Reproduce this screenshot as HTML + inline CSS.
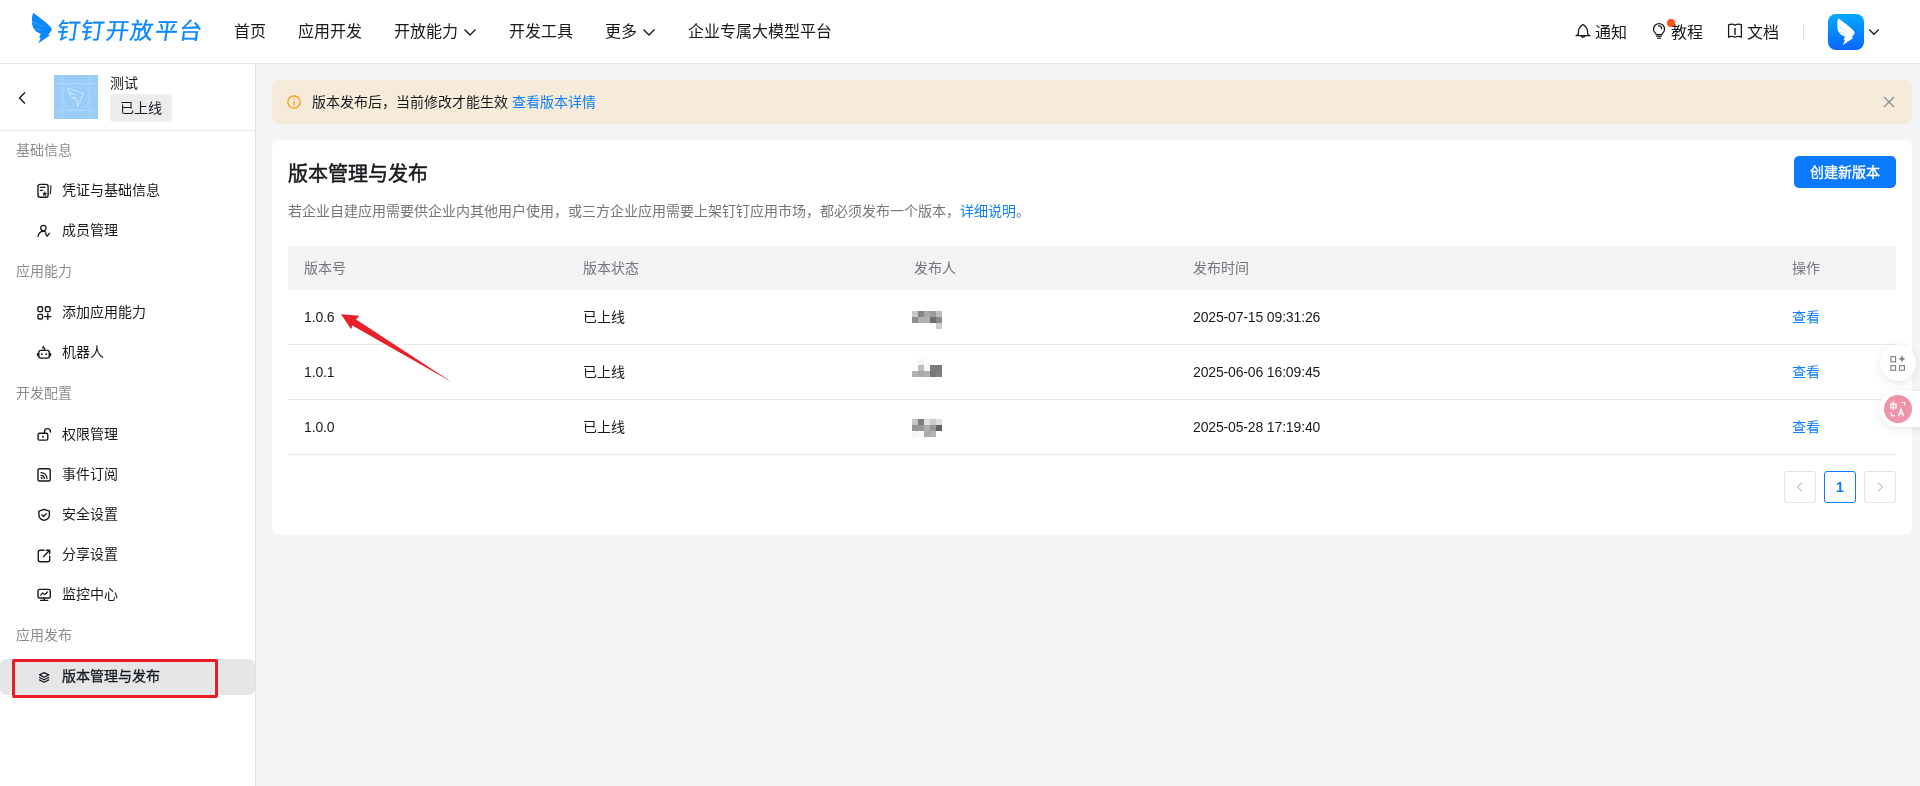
<!DOCTYPE html>
<html lang="zh-CN">
<head>
<meta charset="utf-8">
<style>
*{box-sizing:border-box;margin:0;padding:0}
html,body{width:1920px;height:786px;overflow:hidden;background:#f4f5f7;filter:grayscale(0.001);font-family:"Liberation Sans",sans-serif;color:#171a1d}
.abs{position:absolute}
#hdr{position:absolute;left:0;top:0;width:1920px;height:64px;background:#fff;border-bottom:1px solid #e9eaec}
.nav{position:absolute;top:21px;font-size:16px;line-height:22px;color:#171a1d;white-space:nowrap}
.rt{position:absolute;top:21.5px;font-size:16px;line-height:22px;color:#171a1d;white-space:nowrap}
#side{position:absolute;left:0;top:64px;width:256px;height:722px;background:#fff;border-right:1px solid #dfe0e3}
.sh{position:absolute;left:16px;font-size:14px;line-height:20px;color:#8b8d91;white-space:nowrap}
.si{position:absolute;left:62px;font-size:14px;line-height:20px;color:#171a1d;white-space:nowrap}
.ic{position:absolute;left:36px;width:14px;height:14px}
#banner{position:absolute;left:272px;top:80px;width:1640px;height:44px;background:#f6ead9;border-radius:8px}
#card{position:absolute;left:272px;top:140px;width:1640px;height:395px;background:#fff;border-radius:8px}
.th{position:absolute;top:258px;font-size:14px;line-height:20px;color:#747679;white-space:nowrap}
.td{position:absolute;font-size:14px;line-height:20px;color:#171a1d;white-space:nowrap;letter-spacing:-0.15px}
.lk{color:#0d80ff}
.rowline{position:absolute;left:288px;width:1608px;height:1px;background:#e9eaec}
.pg{position:absolute;top:471px;width:32px;height:32px;border:1px solid #e3e4e6;border-radius:3px;background:#fff}
.mos{position:absolute;width:30px;height:18px}
.mos i{position:absolute;width:6px;height:6px}
</style>
</head>
<body>
<div id="hdr">
  <svg class="abs" style="left:26px;top:8px" width="32" height="40" viewBox="0 0 32 40"><path d="M7.1 4.8 C12 8.5 20 14 24.9 19.3 Q26.6 21.2 25 23.2 L22.4 26.4 L24 27.2 L12.2 35.6 L14.7 30.2 L13.2 29.2 L14.8 25.8 C11.5 24.8 9 23 8.1 21.1 C6.6 19.3 6 16.5 6.1 13.5 C5.9 11.5 5.9 8 7.1 4.8 Z" fill="#0a89ff"/><path d="M6.3 13.3 C9 15 13 16.5 16.3 18.3 M8.2 20.9 C10.5 21.4 12.8 21.6 14.8 21.6" fill="none" stroke="#5aaeff" stroke-width="0.7" stroke-linecap="round"/></svg>
  <div class="abs" style="left:55px;top:17px;font-size:23px;line-height:28px;color:#0a89ff;font-weight:500;transform:skewX(-8deg);transform-origin:left bottom;letter-spacing:1.5px;white-space:nowrap;-webkit-text-stroke:0.3px #0a89ff">钉钉开放平台</div>
  <div class="nav" style="left:234px">首页</div>
  <div class="nav" style="left:298px">应用开发</div>
  <div class="nav" style="left:394px">开放能力</div>
  <svg class="abs" style="left:463px;top:27.3px" width="14" height="10" viewBox="0 0 14 10"><path d="M1.5 2.5 L7 8 L12.5 2.5" fill="none" stroke="#171a1d" stroke-width="1.4"/></svg>
  <div class="nav" style="left:509px">开发工具</div>
  <div class="nav" style="left:605px">更多</div>
  <svg class="abs" style="left:642px;top:27.3px" width="14" height="10" viewBox="0 0 14 10"><path d="M1.5 2.5 L7 8 L12.5 2.5" fill="none" stroke="#171a1d" stroke-width="1.4"/></svg>
  <div class="nav" style="left:688px">企业专属大模型平台</div>

  <svg class="abs" style="left:1574px;top:22px" width="18" height="18" viewBox="0 0 18 18" fill="none" stroke="#171a1d" stroke-width="1.3" stroke-linecap="round" stroke-linejoin="round"><path d="M2 13.6 H16 M2.8 13.6 C4.1 12.8 4.5 12 4.5 10.5 V8.6 C4.5 6.6 5.5 5.7 6.5 4.8 L7.7 3.5 Q9 1.9 10.3 3.5 L11.5 4.8 C12.5 5.7 13.5 6.6 13.5 8.6 V10.5 C13.5 12 13.9 12.8 15.2 13.6 M7.3 14.1 A1.75 1.5 0 0 0 10.7 14.1"/></svg>
  <div class="rt" style="left:1595px">通知</div>
  <svg class="abs" style="left:1650px;top:20px" width="18" height="20" viewBox="0 0 18 20" fill="none" stroke="#171a1d" stroke-width="1.3" stroke-linecap="round" stroke-linejoin="round"><path d="M6.3 14.6 C6.2 13.3 3.5 12.2 3.5 9.2 A5.55 5.55 0 0 1 14.6 9.2 C14.6 12.2 11.9 13.3 11.8 14.6 Z"/><path d="M6.6 16.2 H11.5 M7.6 18.2 H10.5"/><path d="M8.4 5.8 A3.5 3.5 0 0 1 11.9 8.8" stroke-width="1.1"/></svg>
  <div class="abs" style="left:1667px;top:18.8px;width:8px;height:8px;border-radius:50%;background:#ff5219"></div>
  <div class="rt" style="left:1671px">教程</div>
  <svg class="abs" style="left:1726px;top:22px" width="18" height="18" viewBox="0 0 18 18" fill="none" stroke="#171a1d" stroke-width="1.3" stroke-linecap="round" stroke-linejoin="round"><path d="M2.6 2.8 Q5.8 1.3 9 3.1 Q12.2 1.3 15.4 2.8 V15.1 Q12.2 13.6 9 15.3 Q5.8 13.6 2.6 15.1 Z"/><path d="M9 6.5 V12.6" stroke-width="1.4"/></svg>
  <div class="rt" style="left:1746.5px">文档</div>
  <div class="abs" style="left:1803px;top:24px;width:1px;height:16px;background:#dcdde0"></div>
  <div class="abs" style="left:1828px;top:14px;width:36px;height:36px;border-radius:8px;background:linear-gradient(180deg,#03a9ff,#0a64ff)"></div>
  <svg class="abs" style="left:1832px;top:13.6px" width="28.2" height="35.2" viewBox="0 0 32 40"><path d="M7.1 4.8 C12 8.5 20 14 24.9 19.3 Q26.6 21.2 25 23.2 L22.4 26.4 L24 27.2 L12.2 35.6 L14.7 30.2 L13.2 29.2 L14.8 25.8 C11.5 24.8 9 23 8.1 21.1 C6.6 19.3 6 16.5 6.1 13.5 C5.9 11.5 5.9 8 7.1 4.8 Z" fill="#ffffff"/><path d="M6.3 13.3 C9 15 13 16.5 16.3 18.3 M8.2 20.9 C10.5 21.4 12.8 21.6 14.8 21.6" fill="none" stroke="#a9d6ff" stroke-width="0.7" stroke-linecap="round"/></svg>
  <svg class="abs" style="left:1868px;top:28px" width="12" height="8" viewBox="0 0 12 8"><path d="M1.2 1.5 L6 6.3 L10.8 1.5" fill="none" stroke="#171a1d" stroke-width="1.25"/></svg>
</div>

<div id="side">
  <svg class="abs" style="left:17px;top:27px" width="10" height="14" viewBox="0 0 10 14"><path d="M8 1.5 L2.5 7 L8 12.5" fill="none" stroke="#171a1d" stroke-width="1.4"/></svg>
  <svg class="abs" style="left:54px;top:11px" width="44" height="44" viewBox="0 0 44 44">
    <rect width="44" height="44" fill="#99cdf8"/>
    <path d="M8.4 0 V44 M35.6 0 V44 M0 8.5 H44 M0 35.4 H44" stroke="#b0d9fb" stroke-width="0.8"/>
    <circle cx="22.1" cy="21.8" r="13.7" fill="none" stroke="#b0d9fb" stroke-width="0.8"/>
    <path d="M14.3 13.2 C18 14.5 25 16.5 29 19.2 C28 22 26.5 25 25.5 26.5 L26.5 27 L23.5 31.4 L24 28.5 L22.5 27.5 L23.5 25.5 C20 24.5 17.5 22.5 16.5 20 C15 18 14 15.5 14.3 13.2 Z M15.5 17.5 Q19 19.5 22.5 19.7 M18.5 22.5 H22.8" fill="none" stroke="#dcefff" stroke-width="0.8"/>
  </svg>
  <div class="abs" style="left:110px;top:9px;font-size:14px;line-height:20px;color:#171a1d">测试</div>
  <div class="abs" style="left:110px;top:30px;width:62px;height:28px;border-radius:4px;background:#ebecee;font-size:14px;line-height:28px;text-align:center;color:#171a1d">已上线</div>
  <div class="abs" style="left:0;top:66px;width:255px;height:1px;background:#e9eaec"></div>

  <div class="sh" style="top:76px">基础信息</div>
  <svg class="abs" style="left:36px;top:119px" width="16" height="16" viewBox="0 0 16 16" fill="none" stroke="#171a1d" stroke-width="1.4" stroke-linecap="round" stroke-linejoin="round"><rect x="2" y="1.4" width="10.1" height="12.9" rx="2"/><path d="M4.3 4.4 H9 M4.3 7.3 H6.8" stroke-width="1.2"/><path d="M8.7 8.9 L9.3 10.2 L10.7 10.4 L9.7 11.3 L10 12.6 L8.7 11.9 L7.4 12.6 L7.7 11.3 L6.7 10.4 L8.1 10.2 Z" fill="#171a1d" stroke-width="0.6"/><path d="M14.6 2.8 L15 3.3 L14.3 10.8" stroke-width="1.1"/></svg>
  <div class="si" style="top:116px">凭证与基础信息</div>
  <svg class="abs" style="left:36px;top:160px" width="16" height="16" viewBox="0 0 16 16" fill="none" stroke="#171a1d" stroke-width="1.4" stroke-linecap="round" stroke-linejoin="round"><circle cx="7.4" cy="4.1" r="2.7" stroke-width="1.3"/><path d="M2.1 12.5 C2.5 9.2 4.8 7.4 7.4 7.4 C8.4 7.4 9.3 7.7 10 8.2" stroke-width="1.3"/><path d="M9.6 9.6 L11.1 12.3 L13.3 9.3" stroke-width="1.3"/></svg>
  <div class="si" style="top:156px">成员管理</div>

  <div class="sh" style="top:197px">应用能力</div>
  <svg class="abs" style="left:36px;top:241px" width="16" height="16" viewBox="0 0 16 16" fill="none" stroke="#171a1d" stroke-width="1.4" stroke-linecap="round" stroke-linejoin="round"><rect x="1.9" y="1.8" width="4.6" height="4.8" rx="1.3"/><rect x="9.4" y="1.8" width="4.7" height="4.8" rx="1.3"/><rect x="1.9" y="9.4" width="4.6" height="4.6" rx="1.3"/><path d="M11.8 8.6 V14.6 M8.8 11.6 H14.8"/></svg>
  <div class="si" style="top:238px">添加应用能力</div>
  <svg class="abs" style="left:36px;top:281px" width="16" height="16" viewBox="0 0 16 16" fill="none" stroke="#171a1d" stroke-width="1.4" stroke-linecap="round" stroke-linejoin="round"><rect x="2.8" y="5.4" width="10.5" height="7.7" rx="2"/><rect x="0.9" y="8" width="1.4" height="3.2" fill="#171a1d" stroke="none"/><rect x="13.8" y="8" width="1.4" height="3.2" fill="#171a1d" stroke="none"/><circle cx="5.9" cy="9.2" r="0.9" fill="#171a1d" stroke="none"/><circle cx="10.3" cy="9.2" r="0.9" fill="#171a1d" stroke="none"/><path d="M7.6 1.2 L6.4 3 H9 L8.2 4.8" stroke-width="1.1"/></svg>
  <div class="si" style="top:278px">机器人</div>

  <div class="sh" style="top:319px">开发配置</div>
  <svg class="abs" style="left:36px;top:363px" width="16" height="16" viewBox="0 0 16 16" fill="none" stroke="#171a1d" stroke-width="1.4" stroke-linecap="round" stroke-linejoin="round"><rect x="2" y="6.3" width="9.8" height="6.8" rx="1.6"/><path d="M8.5 6.3 V4.6 A2.95 2.95 0 0 1 14.4 4.6 V5"/><circle cx="7" cy="9.7" r="1" fill="#171a1d" stroke="none"/></svg>
  <div class="si" style="top:360px">权限管理</div>
  <svg class="abs" style="left:36px;top:403px" width="16" height="16" viewBox="0 0 16 16" fill="none" stroke="#171a1d" stroke-width="1.4" stroke-linecap="round" stroke-linejoin="round"><rect x="2" y="1.7" width="12.2" height="12.3" rx="1.8"/><path d="M5 5.6 A6 6 0 0 1 11 11.6 M5 8.3 A3.3 3.3 0 0 1 8.3 11.6" stroke-width="1.3"/><circle cx="5.6" cy="10.9" r="1" fill="#171a1d" stroke="none"/></svg>
  <div class="si" style="top:400px">事件订阅</div>
  <svg class="abs" style="left:36px;top:443px" width="16" height="16" viewBox="0 0 16 16" fill="none" stroke="#171a1d" stroke-width="1.4" stroke-linecap="round" stroke-linejoin="round"><path d="M8.15 2.3 L13.4 4.1 V8 C13.4 10.8 11 12.7 8.15 13.4 C5.3 12.7 2.9 10.8 2.9 8 V4.1 Z"/><path d="M5.9 8 L7.5 9.5 L10.4 6.6" stroke-width="1.3"/></svg>
  <div class="si" style="top:440px">安全设置</div>
  <svg class="abs" style="left:36px;top:484px" width="16" height="16" viewBox="0 0 16 16" fill="none" stroke="#171a1d" stroke-width="1.4" stroke-linecap="round" stroke-linejoin="round"><path d="M8 2.3 H4.3 A2 2 0 0 0 2.3 4.3 V11.7 A2 2 0 0 0 4.3 13.7 H11.7 A2 2 0 0 0 13.7 11.7 V8.2"/><path d="M7.6 8.4 L13.7 2.3 M10.2 2.3 H13.7 V5.8"/></svg>
  <div class="si" style="top:480px">分享设置</div>
  <svg class="abs" style="left:36px;top:523px" width="16" height="16" viewBox="0 0 16 16" fill="none" stroke="#171a1d" stroke-width="1.4" stroke-linecap="round" stroke-linejoin="round"><rect x="2" y="2.4" width="12.3" height="8.6" rx="1.8"/><path d="M8.15 11 V13.3 M4.6 13.4 H11.7"/><path d="M4.7 8.2 L6.6 6 L8.8 7.5 L11.5 5" stroke-width="1.2"/></svg>
  <div class="si" style="top:520px">监控中心</div>

  <div class="sh" style="top:561px">应用发布</div>
  <div class="abs" style="left:0;top:595px;width:255px;height:36px;background:#e5e6e8;border-radius:6px"></div>
  <div class="abs" style="left:12px;top:594.5px;width:206px;height:39.5px;border:3.5px solid #e81c24;border-radius:2px"></div>
  <svg class="abs" style="left:36px;top:606px" width="16" height="16" viewBox="0 0 16 16" fill="none" stroke="#171a1d" stroke-width="1.4" stroke-linecap="round" stroke-linejoin="round"><path d="M8.15 2.6 L12.8 4.9 L8.15 7.2 L3.5 4.9 Z" stroke-width="1.2"/><path d="M3.5 7.5 L8.15 9.8 L12.8 7.5 M3.5 9.9 L8.15 12.2 L12.8 9.9" stroke-width="1.2"/></svg>
  <div class="si" style="top:602px;-webkit-text-stroke:0.3px #171a1d">版本管理与发布</div>
</div>

<div id="banner">
  <svg class="abs" style="left:15px;top:15px" width="14" height="14" viewBox="0 0 14 14"><circle cx="7" cy="7" r="6.2" fill="none" stroke="#ff9200" stroke-width="1.2"/><path d="M7 6 V10.5" stroke="#ff9200" stroke-width="1.3"/><circle cx="7" cy="4" r="0.8" fill="#ff9200"/></svg>
  <div class="abs" style="left:40px;top:12px;font-size:14px;line-height:20px;color:#171a1d;white-space:nowrap">版本发布后，当前修改才能生效 <span class="lk">查看版本详情</span></div>
  <svg class="abs" style="left:1611px;top:16px" width="12" height="12" viewBox="0 0 12 12"><path d="M1 1 L11 11 M11 1 L1 11" stroke="#86909c" stroke-width="1.3"/></svg>
</div>

<div id="card">
  <div class="abs" style="left:16px;top:20px;font-size:20px;line-height:28px;font-weight:400;-webkit-text-stroke:0.5px #171a1d;color:#171a1d;white-space:nowrap">版本管理与发布</div>
  <div class="abs" style="left:16px;top:61px;font-size:14px;line-height:20px;color:#747679;white-space:nowrap">若企业自建应用需要供企业内其他用户使用，或三方企业应用需要上架钉钉应用市场，都必须发布一个版本，<span class="lk">详细说明</span>。</div>
  <div class="abs" style="left:1522px;top:16px;width:102px;height:32px;border-radius:5px;background:#0a7aff;color:#fff;font-size:14px;line-height:32px;text-align:center;font-weight:400;-webkit-text-stroke:0.35px #fff">创建新版本</div>
</div>

<div class="abs" style="left:288px;top:246px;width:1608px;height:44px;background:#f2f3f5"></div>
<div class="th" style="left:304px">版本号</div>
<div class="th" style="left:583px">版本状态</div>
<div class="th" style="left:914px">发布人</div>
<div class="th" style="left:1193px">发布时间</div>
<div class="th" style="left:1792px">操作</div>

<div class="td" style="left:304px;top:307px">1.0.6</div>
<div class="td" style="left:583px;top:307px">已上线</div>
<div class="td" style="left:1193px;top:307px">2025-07-15 09:31:26</div>
<div class="td lk" style="left:1792px;top:307px">查看</div>
<div class="rowline" style="top:344px"></div>
<div class="td" style="left:304px;top:362px">1.0.1</div>
<div class="td" style="left:583px;top:362px">已上线</div>
<div class="td" style="left:1193px;top:362px">2025-06-06 16:09:45</div>
<div class="td lk" style="left:1792px;top:362px">查看</div>
<div class="rowline" style="top:399px"></div>
<div class="td" style="left:304px;top:417px">1.0.0</div>
<div class="td" style="left:583px;top:417px">已上线</div>
<div class="td" style="left:1193px;top:417px">2025-05-28 17:19:40</div>
<div class="td lk" style="left:1792px;top:417px">查看</div>
<div class="rowline" style="top:454px"></div>

<!-- mosaics -->
<div class="mos" style="left:912px;top:311px">
<i style="left:0;top:0;background:#c8c8c8"></i><i style="left:6px;top:0;background:#858585"></i><i style="left:12px;top:0;background:#a8a8a8"></i><i style="left:18px;top:0;background:#9a9a9a"></i><i style="left:24px;top:0;background:#bdbdbd"></i>
<i style="left:0;top:6px;background:#8f8f8f"></i><i style="left:6px;top:6px;background:#b0b0b0"></i><i style="left:12px;top:6px;background:#b0b0b0"></i><i style="left:18px;top:6px;background:#6e6e6e"></i><i style="left:24px;top:6px;background:#8a8a8a"></i>
<i style="left:24px;top:12px;background:#cfcfcf"></i>
</div>
<div class="mos" style="left:912px;top:359px">
<i style="left:6px;top:0;background:#f4f4f4"></i>
<i style="left:6px;top:6px;background:#bebebe"></i><i style="left:12px;top:6px;background:#f8f8f8"></i><i style="left:18px;top:6px;background:#7b7b7b"></i><i style="left:24px;top:6px;background:#7b7b7b"></i>
<i style="left:0;top:12px;background:#b4b4b4"></i><i style="left:6px;top:12px;background:#a8a8a8"></i><i style="left:12px;top:12px;background:#b0b0b0"></i><i style="left:18px;top:12px;background:#777777"></i><i style="left:24px;top:12px;background:#828282"></i>
</div>
<div class="mos" style="left:912px;top:419px">
<i style="left:0;top:0;background:#c6c6c6"></i><i style="left:6px;top:0;background:#7e7e7e"></i><i style="left:12px;top:0;background:#e0e0e0"></i><i style="left:18px;top:0;background:#cccccc"></i><i style="left:24px;top:0;background:#dedede"></i>
<i style="left:0;top:6px;background:#969696"></i><i style="left:6px;top:6px;background:#989898"></i><i style="left:12px;top:6px;background:#b0b0b0"></i><i style="left:18px;top:6px;background:#979797"></i><i style="left:24px;top:6px;background:#646464"></i>
<i style="left:0;top:12px;background:#f5f5f5"></i><i style="left:6px;top:12px;background:#fafafa"></i><i style="left:12px;top:12px;background:#acacac"></i><i style="left:18px;top:12px;background:#b3b3b3"></i>
</div>

<!-- pagination -->
<div class="pg" style="left:1784px"><svg class="abs" style="left:10px;top:9px" width="10" height="12" viewBox="0 0 10 12"><path d="M7 1.5 L2.5 6 L7 10.5" fill="none" stroke="#c9cbcf" stroke-width="1.2"/></svg></div>
<div class="pg" style="left:1824px;border-color:#0a7aff;color:#0a7aff;font-size:14px;line-height:30px;text-align:center;font-weight:bold;-webkit-text-stroke:0">1</div>
<div class="pg" style="left:1864px"><svg class="abs" style="left:10px;top:9px" width="10" height="12" viewBox="0 0 10 12"><path d="M3 1.5 L7.5 6 L3 10.5" fill="none" stroke="#c9cbcf" stroke-width="1.2"/></svg></div>

<!-- floating buttons -->
<div class="abs" style="left:1880px;top:345px;width:36px;height:36px;border-radius:50%;background:#fff;box-shadow:0 2px 8px rgba(0,0,0,0.10)"></div>
<svg class="abs" style="left:1876px;top:340px" width="44" height="47" viewBox="0 0 44 47" fill="none" stroke="#808286" stroke-width="1.15"><rect x="14.95" y="16.65" width="4.6" height="5.2"/><rect x="14.95" y="25.65" width="4.6" height="4.6"/><rect x="23.6" y="25.65" width="4.8" height="4.6"/><path d="M26 15.3 Q26.5 18.2 29.5 18.8 Q26.5 19.4 26 22.3 Q25.5 19.4 22.5 18.8 Q25.5 18.2 26 15.3 Z" fill="#808286" stroke="none"/></svg>
<div class="abs" style="left:1879px;top:391px;width:60px;height:36px;border-radius:18px;background:#fff;box-shadow:0 2px 8px rgba(0,0,0,0.10)"></div>
<div class="abs" style="left:1884px;top:395px;width:28px;height:28px;border-radius:50%;background:#ef93a8"></div>
<svg class="abs" style="left:1876px;top:385px" width="44" height="47" viewBox="0 0 44 47" fill="none" stroke="#fff" stroke-width="1.3"><rect x="14.7" y="19" width="5.3" height="3.9"/><path d="M17.35 16.3 V25.2"/><path d="M22.4 31.2 L25 24 L27.6 31.2 M23.4 28.6 H26.6"/><path d="M25.6 17.5 H28.7 V20.8" stroke-width="1.1"/><path d="M15.2 27.2 V30.6 H19" stroke-width="1.1"/></svg>

<!-- red arrow -->
<svg class="abs" style="left:0;top:0" width="1920" height="786" viewBox="0 0 1920 786">
  <path d="M341 314.2 L359.3 315.8 L356.1 319.6 L452.5 382.5 L352.3 325.5 L351.2 329.3 Z" fill="#e8202a"/>
</svg>
</body>
</html>
